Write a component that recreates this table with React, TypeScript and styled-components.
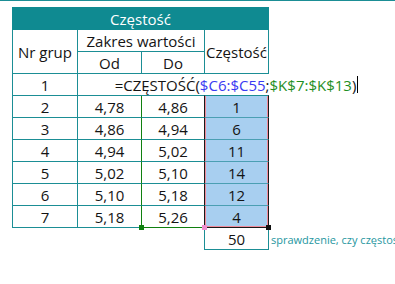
import React from "react";
import styled, { createGlobalStyle, css } from "styled-components";

const TEAL = "#0f8a91";
const LINE = "#1b8e95";
const SEL_FILL = "#a8cff0";
const PINK = "#f08a9a";
const GREEN = "#108010";

const GlobalStyle = createGlobalStyle`
  html, body { margin: 0; padding: 0; background: #fff; overflow: hidden; }
  body { font-family: "Open Sans", "Noto Sans", sans-serif; color: #141414; }
`;

const Page = styled.div`
  width: 395px;
  height: 284px;
  box-sizing: border-box;
  border-top: 1px solid ${LINE};
  padding: 6px 0 0 12px;
`;

const Sheet = styled.div`
  display: grid;
  grid-template-columns: 66px 64px 63px 64px 1fr;
  grid-template-rows: 23px repeat(10, 22px);
  font-size: 15px;
`;

type CellProps = {
  $first?: boolean;
  $right?: string;
  $bottom?: string;
  $noRight?: boolean;
};

const Cell = styled.div<CellProps>`
  position: relative;
  box-sizing: border-box;
  display: flex;
  align-items: center;
  justify-content: center;
  white-space: nowrap;
  border-bottom: 1px solid ${(p) => p.$bottom ?? LINE};
  border-right: 1px solid ${(p) => p.$right ?? LINE};
  ${(p) => p.$noRight && css`border-right: none;`}
  ${(p) => p.$first && css`border-left: 1px solid ${LINE};`}
`;

const Band = styled.div`
  grid-column: 1 / span 4;
  background: ${TEAL};
  color: #fff;
  display: flex;
  align-items: center;
  justify-content: center;
  font-size: 15px;
`;

const Tall = styled(Cell)`
  grid-row: span 2;
`;

const Wide = styled(Cell)`
  grid-column: span 2;
`;

const Selected = styled(Cell)<{ $last?: boolean }>`
  background: ${SEL_FILL};
  border-right: 1px solid #1a1a1a;
  border-bottom: 1px solid ${(p) => (p.$last ? "#1a1a1a" : "#4b9fb3")};
  box-shadow: inset 1px 0 0 ${PINK}, inset -1px 0 0 ${PINK}
    ${(p) => (p.$last ? `, inset 0 -1px 0 ${PINK}` : "")};
`;

const EditCell = styled(Cell)`
  z-index: 1;
`;

const Editor = styled.span`
  background: #fff;
  height: 21px;
  padding: 0 3px;
  display: flex;
  align-items: center;
  flex-shrink: 0;
`;

const Ref = styled.span<{ $tone: string }>`
  color: ${(p) => p.$tone};
`;

const Caret = styled.span`
  display: inline-block;
  width: 1px;
  height: 17px;
  background: #000;
  margin-left: 1px;
`;

const Blank = styled.div`
  grid-column: span 3;
`;

const Total = styled(Cell)`
  border: 1px solid ${LINE};
  border-top: none;
  margin-left: -1px;
`;

const Note = styled.div`
  display: flex;
  align-items: center;
  padding-left: 2px;
  font-size: 11px;
  color: #1e96a0;
  white-space: nowrap;
  overflow: visible;
`;

const Handle = styled.span<{ $color: string; $x: "left" | "right" }>`
  position: absolute;
  bottom: -3px;
  ${(p) => (p.$x === "left" ? "left: -3px;" : "right: -3px;")}
  width: 5px;
  height: 5px;
  background: ${(p) => p.$color};
  z-index: 2;
`;

const rows = [
  ["2", "4,78", "4,86", "1"],
  ["3", "4,86", "4,94", "6"],
  ["4", "4,94", "5,02", "11"],
  ["5", "5,02", "5,10", "14"],
  ["6", "5,10", "5,18", "12"],
  ["7", "5,18", "5,26", "4"],
];

export default function App() {
  return (
    <>
      <GlobalStyle />
      <Page>
        <Sheet>
          <Band>Częstość</Band>
          <div />
          <Tall $first>Nr grup</Tall>
          <Wide>Zakres wartości</Wide>
          <Tall>Częstość</Tall>
          <div />
          <Cell>Od</Cell>
          <Cell>Do</Cell>
          <div />

          <Cell $first>1</Cell>
          <Cell $noRight />
          <Cell $right="#1a1a1a" />
          <EditCell $right="#1a1a1a">
            <Editor>
              =CZĘSTOŚĆ(
              <Ref $tone="#3a3af2">$C6:$C55</Ref>;
              <Ref $tone="#1f8f1f">$K$7:$K$13</Ref>)
              <Caret />
            </Editor>
          </EditCell>
          <div />

          {rows.map((r, i) => {
            const last = i === rows.length - 1;
            return (
              <React.Fragment key={r[0]}>
                <Cell $first>{r[0]}</Cell>
                <Cell $right={GREEN}>
                  {r[1]}
                  {last && <Handle $color={GREEN} $x="right" />}
                </Cell>
                <Cell $right="#1a1a1a" $bottom={last ? GREEN : undefined}>
                  {r[2]}
                </Cell>
                <Selected $last={last}>
                  {r[3]}
                  {last && <Handle $color="#ee8fd0" $x="left" />}
                  {last && <Handle $color="#111" $x="right" />}
                </Selected>
                <div />
              </React.Fragment>
            );
          })}

          <Blank />
          <Total>50</Total>
          <Note>sprawdzenie, czy częstość</Note>
        </Sheet>
      </Page>
    </>
  );
}
